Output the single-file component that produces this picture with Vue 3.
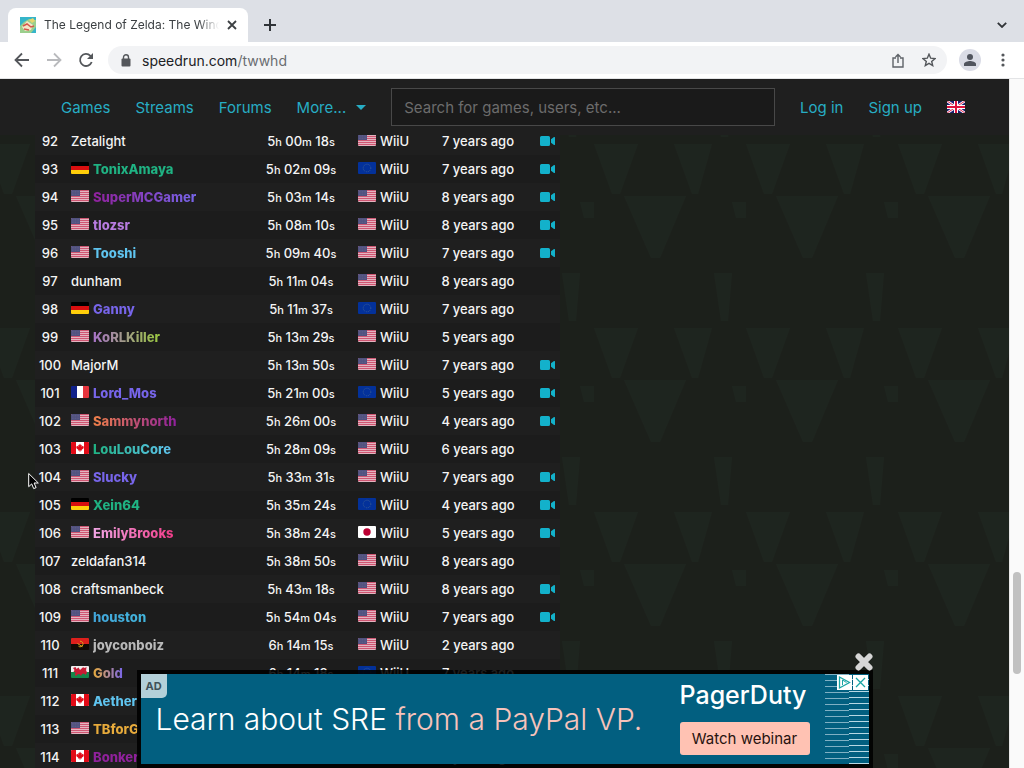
<template>
  <div class="browser">
    <svg class="sprite" aria-hidden="true">
      <symbol id="flag-us" viewBox="0 0 18 12">
        <rect width="18" height="12" fill="#e3b4c0" />
        <path d="M0 .5h18M0 2.5h18M0 4.5h18M0 6.5h18M0 8.5h18M0 10.5h18" stroke="#cf5672" stroke-width="1" />
        <rect width="9" height="6" fill="#51517f" />
        <path d="M1 1.5h7M1 3h7M1 4.5h7" stroke="#6c6c92" stroke-width=".6" stroke-dasharray=".7 .9" />
      </symbol>
      <symbol id="flag-de" viewBox="0 0 18 12">
        <rect width="18" height="4" fill="#000" />
        <rect y="4" width="18" height="4" fill="#d80f0f" />
        <rect y="8" width="18" height="4" fill="#ffce0a" />
      </symbol>
      <symbol id="flag-eu" viewBox="0 0 18 12">
        <rect width="18" height="12" fill="#03319a" />
        <circle cx="9" cy="6" r="3.8" fill="none" stroke="#3a5c94" stroke-width="1" stroke-dasharray="1 1" />
      </symbol>
      <symbol id="flag-fr" viewBox="0 0 18 12">
        <rect width="6" height="12" fill="#10218b" />
        <rect x="6" width="6" height="12" fill="#fff" />
        <rect x="12" width="6" height="12" fill="#e5343d" />
      </symbol>
      <symbol id="flag-ca" viewBox="0 0 18 12">
        <rect width="18" height="12" fill="#fff" />
        <path d="M0 0h5v12H0zM13 0h5v12h-5z" fill="#e30b17" />
        <path d="M9 1.600l.9 1.600.9-.4-.3 2 1.200-1 .3.700 1 0-.5 1.200.4.400-2.200 1.600.2.900-1.600-.2V10h-.6V8.400l-1.600.2.2-.9-2.200-1.600.4-.4-.5-1.200h1l.3-.7 1.200 1-.3-2 .9.400z" fill="#e30b17" />
      </symbol>
      <symbol id="flag-jp" viewBox="0 0 18 12">
        <rect width="18" height="12" fill="#fff" />
        <circle cx="9" cy="6" r="3.7" fill="#bc0032" />
      </symbol>
      <symbol id="flag-ao" viewBox="0 0 18 12">
        <rect width="18" height="6" fill="#dd201c" />
        <rect y="6" width="18" height="6" fill="#110a05" />
        <path d="M9 3.200a2.800 2.800 0 1 1-1.500 5M6.500 5.500l5 3.200" fill="none" stroke="#d9a51c" stroke-width="1" />
      </symbol>
      <symbol id="flag-wales" viewBox="0 0 18 12">
        <rect width="18" height="6" fill="#f1eeee" />
        <rect y="6" width="18" height="6" fill="#14864a" />
        <path d="M2 2l2.500-1 1 2 2-1.500L9 4l3-2.700L14 2l1.500-1.200-.4 3.700 1 2-1.600 2.500-1.500-1.500-2 .5-1 2L8.500 8l-2.300.6L5 10.200 3.800 8.500l1-2L2.500 6l1-2z" fill="#c91c34" />
      </symbol>
      <symbol id="flag-gb" viewBox="0 0 18 12">
        <rect width="18" height="12" fill="#1a1f70" />
        <path d="M0 0l18 12M18 0L0 12" stroke="#fff" stroke-width="2.6" />
        <path d="M0 0l18 12M18 0L0 12" stroke="#e0234b" stroke-width="1" />
        <path d="M9 0v12M0 6h18" stroke="#fff" stroke-width="4" />
        <path d="M9 0v12M0 6h18" stroke="#e0123c" stroke-width="2" />
      </symbol>
      <symbol id="video" viewBox="0 0 15 10">
        <path d="M1.500 0h7A1.500 1.500 0 0 1 10 1.500v7A1.500 1.500 0 0 1 8.500 10h-7A1.500 1.500 0 0 1 0 8.500v-7A1.500 1.500 0 0 1 1.500 0zM11 3.300l3-2.200c.5-.3 1 0 1 .5v6.800c0 .5-.5.8-1 .5l-3-2.200z" fill="#13b1cb" />
      </symbol>
    </svg>

    <header class="tab-strip">
      <div class="tab">
        <svg class="favicon" viewBox="0 0 16 16">
          <rect width="16" height="16" fill="#35b5c9" />
          <path d="M0 16V9l4-4 5-3 7 1v7l-5 6z" fill="#9bcf8d" />
          <path d="M2 10l5-6 6 4-2 5-6 1z" fill="#f3e6c7" />
          <path d="M3 9l4-2 4 3 3-1M4 12l5 1" stroke="#d4574c" stroke-width="1.5" fill="none" />
          <path d="M9 3l4-2 2 3-3 2z" fill="#e8d56c" />
        </svg>
        <span class="tab-title">The Legend of Zelda: The Wind</span>
        <button class="icon-btn" aria-label="Close tab">
          <svg width="10" height="10" viewBox="0 0 10 10"><path d="M1 1l8 8M9 1L1 9" stroke="#3c4043" stroke-width="1.8" /></svg>
        </button>
      </div>
      <button class="icon-btn new-tab" aria-label="New tab">
        <svg width="12" height="12" viewBox="0 0 12 12"><path d="M6 0v12M0 6h12" stroke="#303438" stroke-width="2" /></svg>
      </button>
      <button class="icon-btn tab-search" aria-label="Search tabs">
        <svg width="10" height="6" viewBox="0 0 10 6"><path d="M.8.8L5 5 9.200.8" fill="none" stroke="#303438" stroke-width="1.8" /></svg>
      </button>
    </header>

    <div class="toolbar">
      <button class="icon-btn" aria-label="Back">
        <svg width="16" height="16" viewBox="0 0 16 16"><path d="M15 8H2M8 1.500L1.500 8 8 14.500" fill="none" stroke="#54575b" stroke-width="1.8" /></svg>
      </button>
      <button class="icon-btn" aria-label="Forward">
        <svg width="16" height="16" viewBox="0 0 16 16"><path d="M1 8h13M8 1.500L14.500 8 8 14.500" fill="none" stroke="#b9babd" stroke-width="1.8" /></svg>
      </button>
      <button class="icon-btn" aria-label="Reload">
        <svg width="16" height="16" viewBox="0 0 16 16"><path d="M13.700 10A6 6 0 1 1 12.400 3.800L14 5.500" fill="none" stroke="#54575b" stroke-width="1.8" /><path d="M15 1v6H9z" fill="#54575b" /></svg>
      </button>
      <div class="address">
        <svg width="10" height="13" viewBox="0 0 10 13"><path d="M2.500 5V3.300a2.500 2.500 0 0 1 5 0V5" fill="none" stroke="#54575b" stroke-width="1.4" /><rect x=".5" y="4.500" width="9" height="8" rx="1" fill="#54575b" /></svg>
        <span class="url">speedrun.com<span>/twwhd</span></span>
        <button class="icon-btn" aria-label="Share">
          <svg width="12" height="15" viewBox="0 0 12 15"><path d="M4 5H1v9h10V5H8M6 10V1.500M3.500 4L6 1.500 8.500 4" fill="none" stroke="#5f6368" stroke-width="1.4" /></svg>
        </button>
        <button class="icon-btn" aria-label="Bookmark">
          <svg width="14" height="14" viewBox="0 0 14 14"><path d="M7 1.200l1.700 4 4.300.4-3.300 2.800 1 4.200L7 10.400l-3.700 2.200 1-4.200L1 5.600l4.300-.4z" fill="none" stroke="#54575b" stroke-width="1.4" /></svg>
        </button>
      </div>
      <button class="icon-btn avatar" aria-label="Profile">
        <svg width="12" height="12" viewBox="0 0 12 12"><circle cx="6" cy="3" r="3" fill="#50545e" /><path d="M0 12v-2c0-2 4-3 6-3s6 1 6 3v2z" fill="#50545e" /></svg>
      </button>
      <button class="icon-btn" aria-label="Menu">
        <svg width="4" height="14" viewBox="0 0 4 14"><circle cx="2" cy="2" r="1.600" fill="#54575b" /><circle cx="2" cy="7" r="1.600" fill="#54575b" /><circle cx="2" cy="12" r="1.600" fill="#54575b" /></svg>
      </button>
    </div>

    <div class="viewport">
      <main class="page">
        <svg class="backdrop" aria-hidden="true">
          <defs>
            <pattern id="triangles" x="124" y="65" width="152" height="184" patternUnits="userSpaceOnUse">
              <path d="M14 0h44L40 50h-8zM94 0h38l-14 50h-6zM44 52h62L80 114h-9zM134 129h18l-4 48h-7zM0 58h14v16H4z" fill="#1e251f" />
            </pattern>
          </defs>
          <rect width="100%" height="100%" fill="url(#triangles)" />
        </svg>

        <nav class="site-nav">
          <a href="#">Games</a>
          <a href="#">Streams</a>
          <a href="#">Forums</a>
          <a href="#" class="more">More...<i class="caret"></i></a>
          <input type="search" placeholder="Search for games, users, etc..." aria-label="Search for games, users, etc...">
          <a href="#">Log in</a>
          <a href="#">Sign up</a>
          <a href="#" class="lang" aria-label="English"><svg class="flag"><use href="#flag-gb" /></svg></a>
        </nav>

        <table class="board">
          <colgroup>
            <col class="c-rank"><col class="c-name"><col class="c-time"><col class="c-platform"><col class="c-date"><col class="c-video">
          </colgroup>
          <tbody>
            <tr v-for="run in runs" :key="run.rank">
              <td>{{ run.rank }}</td>
              <td class="player">
                <svg v-if="run.flag" class="flag"><use :href="`#flag-${run.flag}`" /></svg>
                <a v-if="run.colors" href="#" class="user" :style="gradient(run.colors)">{{ run.name }}</a>
                <span v-else>{{ run.name }}</span>
              </td>
              <td>
                <template v-for="(part, i) in run.time" :key="i">{{ i ? ' ' : '' }}{{ part }}<small>{{ 'hms'[i] }}</small></template>
              </td>
              <td><svg class="flag"><use :href="`#flag-${run.region}`" /></svg>WiiU</td>
              <td>{{ run.years }} years ago</td>
              <td><a v-if="run.video" href="#" class="video" aria-label="Video"><svg width="15" height="10"><use href="#video" /></svg></a></td>
            </tr>
          </tbody>
        </table>

        <svg class="pointer" width="12" height="18" viewBox="0 0 12 18"><path d="M.7 1.500v13.200l3-2.800 2 4.700 2.400-1-2-4.600h4.200z" fill="#000" stroke="#fff" stroke-width="1" /></svg>

        <aside class="ad">
          <button class="icon-btn ad-close" aria-label="Close ad">
            <svg width="18" height="18" viewBox="0 0 18 18"><path d="M3.500 3.500l11 11M14.500 3.500l-11 11" stroke="#d6d6d6" stroke-width="6" stroke-linecap="round" /></svg>
          </button>
          <div class="ad-body">
            <span class="ad-badge">AD</span>
            <p class="ad-text">Learn about SRE <em>from a PayPal VP.</em></p>
            <div class="ad-brand">
              <strong>PagerDuty</strong>
              <button>Watch webinar</button>
            </div>
            <div class="stripes"><i></i><i></i></div>
            <div class="ad-choices">
              <svg width="15" height="15" viewBox="0 0 15 15"><path d="M2.500 2v11L12.500 7.500z" fill="none" stroke="#1aa5a5" stroke-width="1.3" /><path d="M5.500 5v5M5.500 5l4 2.500" stroke="#1aa5a5" fill="none" /></svg>
              <svg width="15" height="15" viewBox="0 0 15 15"><path d="M3 3l9 9M12 3l-9 9" stroke="#1aa5a5" stroke-width="1.3" /></svg>
            </div>
          </div>
        </aside>
      </main>
      <div class="scrollbar"><div class="thumb"></div></div>
    </div>
  </div>
</template>

<script setup>
const green = '#1fb383', blue = '#5fc4ef', violet = '#7765ea', purple = '#90219c', lilac = '#b77be0', gold = '#e8ab3b'

// rank, flag, name, colors, time, region, years, video
const runs = [
  [92, '', 'Zetalight', null, '5 00 18', 'us', 7, 1],
  [93, 'de', 'TonixAmaya', [green, green], '5 02 09', 'eu', 7, 1],
  [94, 'us', 'SuperMCGamer', [purple, violet], '5 03 14', 'us', 8, 1],
  [95, 'us', 'tlozsr', [lilac, lilac], '5 08 10', 'us', 8, 1],
  [96, 'us', 'Tooshi', [blue, blue], '5 09 40', 'us', 7, 1],
  [97, '', 'dunham', null, '5 11 04', 'us', 8, 0],
  [98, 'de', 'Ganny', [violet, violet], '5 11 37', 'eu', 7, 0],
  [99, 'us', 'KoRLKiller', ['#a873c8', '#9ac93f'], '5 13 29', 'us', 5, 0],
  [100, '', 'MajorM', null, '5 13 50', 'us', 7, 1],
  [101, 'fr', 'Lord_Mos', [violet, violet], '5 21 00', 'eu', 5, 1],
  [102, 'us', 'Sammynorth', ['#ef8049', purple], '5 26 00', 'us', 4, 1],
  [103, 'ca', 'LouLouCore', [green, blue], '5 28 09', 'us', 6, 0],
  [104, 'us', 'Slucky', [violet, violet], '5 33 31', 'us', 7, 1],
  [105, 'de', 'Xein64', [green, green], '5 35 24', 'eu', 4, 1],
  [106, 'us', 'EmilyBrooks', ['#f0a5e4', '#f13c88'], '5 38 24', 'jp', 5, 1],
  [107, '', 'zeldafan314', null, '5 38 50', 'us', 8, 0],
  [108, '', 'craftsmanbeck', null, '5 43 18', 'us', 8, 1],
  [109, 'us', 'houston', ['#42a5da', '#42b5dc'], '5 54 04', 'us', 7, 1],
  [110, 'ao', 'joyconboiz', ['#b9b9b9', '#b9b9b9'], '6 14 15', 'us', 2, 0],
  [111, 'wales', 'Gold', [gold, violet], '6 14 18', 'eu', 7, 0],
  [112, 'ca', 'Aether', [blue, blue], '', '', 0, 0],
  [113, 'us', 'TBforG', [gold, gold], '', '', 0, 0],
  [114, 'ca', 'Bonker', [purple, purple], '', '', 0, 0],
].filter(r => r[0]).map(([rank, flag, name, colors, time, region, years, video]) =>
  ({ rank, flag, name, colors, time: (time || '6 20 00').split(' '), region: region || 'us', years: years || 7, video }))

const gradient = ([from, to]) => ({ backgroundImage: `linear-gradient(90deg, ${from}, ${to})` })
</script>

<style>
body { margin:0; background:#1c201b; }
</style>

<style scoped>
.browser { display:flex; flex-direction:column; height:100vh; overflow:hidden; font-family:Inter, "Liberation Sans", sans-serif; }
.browser * { box-sizing:border-box; }
.sprite { position:absolute; width:0; height:0; }
a { color:inherit; text-decoration:none; }
.icon-btn { display:flex; align-items:center; justify-content:center; padding:0; border:0; background:none; cursor:pointer; flex:none; }

.tab-strip { display:flex; align-items:center; height:42px; padding:8px 17px 0 8px; background:#dde0e6; flex:none; }
.tab { display:flex; align-items:center; width:240px; height:34px; padding:0 11px 0 12px; background:#fff; border-radius:8px 8px 0 0; }
.favicon { width:16px; height:16px; flex:none; }
.tab-title { flex:1; min-width:0; margin:0 8px; font-size:12px; line-height:16px; color:#3c4043; white-space:nowrap; overflow:hidden; mask-image:linear-gradient(90deg, #000 88%, transparent); }
.new-tab { margin-left:16px; }
.tab-search { margin-left:auto; }

.toolbar { display:flex; align-items:center; gap:16px; height:37px; padding:0 19px 0 14px; background:#fff; border-bottom:1px solid #e3e4e6; flex:none; }
.address { display:flex; align-items:center; flex:1; height:28px; padding:0 11px 0 13px; margin-left:-2px; background:#f2f3f5; border-radius:14px; gap:18px; }
.url { flex:1; margin-left:-7px; font-size:14px; color:#202124; }
.url span { color:#6a6d71; }
.avatar { width:22px; height:22px; border-radius:50%; background:#dadce6; margin:0 4px 0 -4px; }

.viewport { display:flex; flex:1; min-height:0; }
.page { position:relative; flex:1; min-width:0; overflow:hidden; background:#1c201b; }
.backdrop { position:absolute; inset:0; width:100%; height:100%; }
.scrollbar { display:flex; flex-direction:column; width:15px; padding:0 3px; background:#fafafa; border-left:1px solid #e8e8e8; }
.scrollbar::before { content:""; flex:493; }
.scrollbar::after { content:""; flex:94; }
.thumb { flex:102; border-radius:4px; background:#c1c1c1; }

.site-nav { position:absolute; top:0; left:0; right:0; z-index:2; display:flex; align-items:center; gap:25px; height:56px; padding:0 44px 0 61px; background:#1f1f1f; color:#27adc4; font-size:15px; white-space:nowrap; }
.more { display:flex; align-items:center; gap:10px; }
.caret { border:5px solid transparent; border-top-color:#27adc4; border-bottom:0; }
.site-nav input { flex:1; min-width:0; height:38px; padding:0 12px; border:1px solid #484848; border-radius:0; background:#1a1a1a; color:#ddd; font:inherit; outline:none; }
.site-nav input::placeholder { color:#6c6c6c; opacity:1; }
.lang { display:flex; }

.flag { width:18px; height:12px; border-radius:1px; vertical-align:0; }
.board { position:relative; width:525px; margin:48px 0 0 35px; border-collapse:collapse; table-layout:fixed; color:#f4f4f4; font-size:13px; font-weight:500; line-height:20px; text-align:center; }
.c-rank { width:30px; } .c-name { width:191px; } .c-time { width:90px; } .c-platform { width:75px; } .c-date { width:114px; } .c-video { width:25px; }
.board tr { background:#1f1f1f; }
.board tr:nth-child(even) { background:#1c1c1c; }
.board td { height:28px; padding:0; white-space:nowrap; }
.board .player { padding-left:6px; text-align:left; }
.board .flag { margin-right:4px; }
.board small { font-size:11px; }
.user { font-weight:800; color:transparent; background-clip:text; -webkit-background-clip:text; }
.video { display:flex; justify-content:center; }

.pointer { position:absolute; left:28px; top:393px; }

.ad { position:absolute; left:50%; bottom:0; z-index:3; width:736px; padding:4px; transform:translateX(-50%); background:rgba(0,0,0,0.88); }
.ad-close { position:absolute; right:0; top:-17px; }
.ad-body { position:relative; display:flex; height:90px; background:#025f80; }
.ad-badge { position:absolute; left:0; top:0; padding:4px 5px; border-radius:0 0 5px 0; background:#b3d0d9; color:#3f5158; font-size:11px; line-height:16px; font-weight:700; }
.ad-text { flex:1; margin:0; padding:0 0 0 15px; color:#fff; font-size:30px; line-height:90px; font-weight:300; white-space:nowrap; }
.ad-text em { font-style:normal; color:#f7c3bb; }
.ad-brand { display:flex; flex-direction:column; gap:10px; width:130px; margin-right:15px; padding-top:5px; }
.ad-brand strong { color:#fff; font-size:25px; line-height:33px; font-weight:500; }
.ad-brand button { height:33px; padding:0; border:0; border-radius:3px; background:#ffc2b3; color:#27130f; font:400 15px Inter, "Liberation Sans", sans-serif; cursor:pointer; }
.stripes { display:flex; width:44px; }
.stripes i { flex:24; background:repeating-linear-gradient(#7fb0c4 0 1px, transparent 1px 6px); }
.stripes i + i { flex:20; background:repeating-linear-gradient(transparent 0 5px, #b7d8e4 5px 6px); }
.ad-choices { position:absolute; right:1px; top:1px; display:flex; gap:1px; }
.ad-choices svg { background:#fff; }
</style>
